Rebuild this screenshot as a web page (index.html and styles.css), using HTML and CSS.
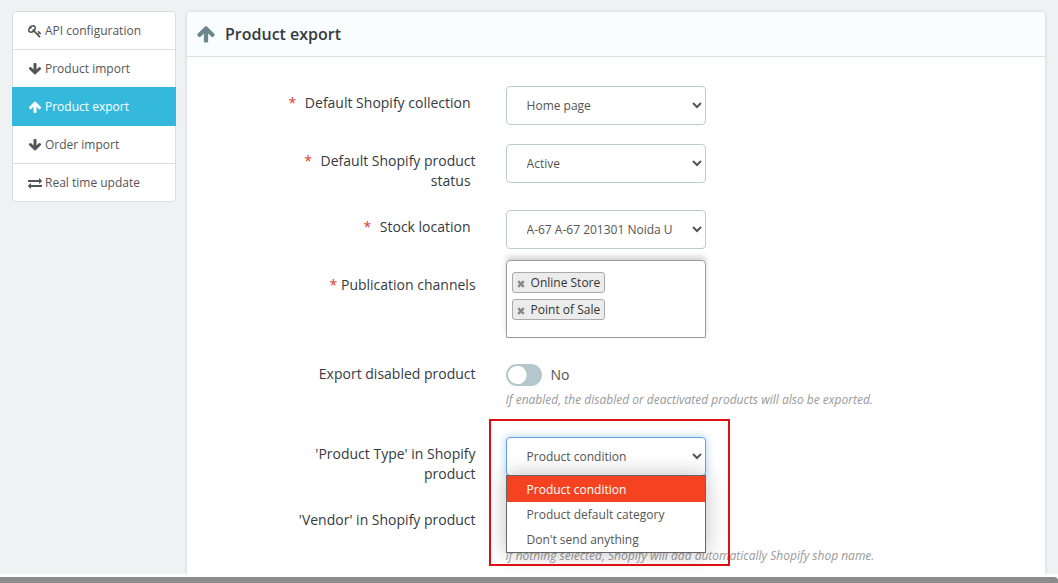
FILE: index.html
```html
<!DOCTYPE html>
<html lang="en">
<head>
    <meta charset="UTF-8">
    <meta name="viewport" content="width=device-width, initial-scale=1.0">
    <title>Product export</title>
    <link rel="stylesheet" href="styles.css">
</head>
<body>
    <svg class="sprite" aria-hidden="true">
        <symbol id="icon-key" viewBox="0 0 1792 1792"><path d="M832 512q0-80-56-136t-136-56-136 56-56 136q0 42 19 83-41-19-83-19-80 0-136 56t-56 136 56 136 136 56 136-56 56-136q0-42-19-83 41 19 83 19 80 0 136-56t56-136zm851 704q0 17-49 66t-66 49q-9 0-28.5-16t-36.5-33-38.5-40-24.5-26l-96 96 220 220q28 28 28 68 0 42-39 81t-81 39q-40 0-68-28l-671-671q-176 131-365 131-163 0-265.5-102.5t-102.5-265.5q0-160 95-313t248-248 313-95q163 0 265.5 102.5t102.5 265.5q0 189-131 365l355 355 96-96q-3-3-26-24.5t-40-38.5-33-36.5-16-28.5q0-17 49-66t66-49q13 0 23 10 6 6 46 44.5t82 79.5 86.5 86 73 78 28.5 41z"/></symbol>
        <symbol id="icon-down" viewBox="0 0 1792 1792"><path d="M1675 832q0 53-37 90l-651 652q-39 37-91 37-53 0-90-37l-651-652q-38-36-38-90 0-53 38-91l74-75q39-37 91-37 53 0 90 37l294 294v-704q0-52 38-90t90-38h128q52 0 90 38t38 90v704l294-294q37-37 90-37 52 0 91 37l75 75q37 39 37 91z"/></symbol>
        <symbol id="icon-up" viewBox="0 0 1792 1792"><path d="M1675 971q0 51-37 90l-75 75q-38 38-91 38-54 0-90-38l-294-293v704q0 52-37.5 84.5t-90.5 32.5h-128q-53 0-90.5-32.5t-37.5-84.5v-704l-294 293q-36 38-90 38t-90-38l-75-75q-38-38-38-90 0-53 38-91l651-651q35-37 90-37 54 0 91 37l651 651q37 39 37 91z"/></symbol>
        <symbol id="icon-exchange" viewBox="0 0 1792 1792"><path d="M1792 1184v192q0 13-9.5 22.5t-22.5 9.5h-1376v192q0 13-9.5 22.5t-22.5 9.5q-12 0-24-10l-319-320q-9-9-9-22 0-14 9-23l320-320q9-9 23-9 13 0 22.5 9.5t9.5 22.5v192h1376q13 0 22.5 9.5t9.5 22.5zm0-544q0 14-9 23l-320 320q-9 9-23 9-13 0-22.5-9.5t-9.5-22.5v-192h-1376q-13 0-22.5-9.5t-9.5-22.5v-192q0-13 9.5-22.5t22.5-9.5h1376v-192q0-14 9-23t23-9q12 0 24 10l319 319q9 9 9 23z"/></symbol>
        <symbol id="icon-remove" viewBox="0 0 8 8"><path d="M1.2 1.2l5.6 5.6M6.8 1.2l-5.6 5.6" fill="none" stroke="#888" stroke-width="2.4"/></symbol>
    </svg>

    <div class="page">
        <nav class="sidebar">
            <a href="#" class="menu-item"><svg class="icon"><use href="#icon-key"/></svg>API configuration</a>
            <a href="#" class="menu-item"><svg class="icon"><use href="#icon-down"/></svg>Product import</a>
            <a href="#" class="menu-item active"><svg class="icon"><use href="#icon-up"/></svg>Product export</a>
            <a href="#" class="menu-item"><svg class="icon"><use href="#icon-down"/></svg>Order import</a>
            <a href="#" class="menu-item"><svg class="icon"><use href="#icon-exchange"/></svg>Real time update</a>
        </nav>

        <main class="panel">
            <h1 class="panel-heading"><svg class="heading-icon"><use href="#icon-up"/></svg>Product export</h1>

            <form class="form">
                <div class="row">
                    <label class="label required spaced" for="collection">Default Shopify collection</label>
                    <div class="field">
                        <select class="control" id="collection"><option>Home page</option></select>
                    </div>
                </div>
                <div class="row">
                    <label class="label required spaced" for="status">Default Shopify product status</label>
                    <div class="field">
                        <select class="control" id="status"><option>Active</option></select>
                    </div>
                </div>
                <div class="row">
                    <label class="label required spaced" for="location">Stock location</label>
                    <div class="field">
                        <select class="control" id="location"><option>A-67 A-67 201301 Noida U</option></select>
                    </div>
                </div>
                <div class="row row-channels">
                    <span class="label required" id="channels">Publication channels</span>
                    <div class="field">
                        <div class="channels" role="group" aria-labelledby="channels">
                            <span class="chip"><button type="button" class="chip-remove" aria-label="Remove"><svg><use href="#icon-remove"/></svg></button>Online Store</span>
                            <span class="chip"><button type="button" class="chip-remove" aria-label="Remove"><svg><use href="#icon-remove"/></svg></button>Point of Sale</span>
                        </div>
                    </div>
                </div>
                <div class="row">
                    <label class="label" for="disabled">Export disabled product</label>
                    <div class="field">
                        <div class="switch">
                            <input type="checkbox" class="switch-input" id="disabled">
                            <span>No</span>
                        </div>
                        <p class="help help-switch">If enabled, the disabled or deactivated products will also be exported.</p>
                    </div>
                </div>
                <div class="row">
                    <label class="label" for="type">'Product Type' in Shopify product</label>
                    <div class="field">
                        <div class="dropdown">
                            <select class="control focused" id="type"><option>Product condition</option></select>
                            <div class="options">
                                <button type="button" class="option selected">Product condition</button>
                                <button type="button" class="option">Product default category</button>
                                <button type="button" class="option">Don't send anything</button>
                            </div>
                            <div class="highlight"></div>
                        </div>
                    </div>
                </div>
                <div class="row">
                    <label class="label" for="vendor">'Vendor' in Shopify product</label>
                    <div class="field">
                        <select class="control" id="vendor"></select>
                        <p class="help">If nothing selected, Shopify will add automatically Shopify shop name.</p>
                    </div>
                </div>
            </form>
        </main>
    </div>
    <div class="scroll-track"><div class="scroll-bar"></div></div>
</body>
</html>
```

FILE: styles.css
```css
* {
    box-sizing: border-box;
}
body {
    display: flex;
    flex-direction: column;
    height: 100vh;
    margin: 0;
    overflow: hidden;
    background: #fff;
    color: #363a41;
    font-family: "Open Sans", sans-serif;
    font-size: 14px;
    line-height: 20px;
}
.sprite {
    display: none;
}
.page {
    display: flex;
    flex: 1;
    align-items: flex-start;
    gap: 10px;
    min-height: 0;
    padding: 11px 12px 0;
    overflow: hidden;
    background: #eff1f2;
}

/* sidebar */
.sidebar {
    flex: 0 0 164px;
}
.menu-item {
    display: flex;
    align-items: center;
    gap: 3px;
    margin-bottom: -1px;
    padding: 10px 15px;
    border: 1px solid #dbdddd;
    background: #fff;
    color: #555;
    font-size: 12px;
    line-height: 17px;
    text-decoration: none;
}
.menu-item:first-child {
    border-radius: 4px 4px 0 0;
}
.menu-item:last-child {
    border-radius: 0 0 4px 4px;
}
.menu-item.active {
    position: relative;
    border-color: #34b9dc;
    background: #34b9dc;
    color: #fff;
}
.icon {
    width: 14px;
    height: 14px;
    fill: currentColor;
}

/* panel */
.panel {
    flex: 1;
    min-width: 0;
    border: 1px solid #dfe5e7;
    border-radius: 4px;
    background: #fff;
    box-shadow: 0 0 4px rgba(0, 0, 0, 0.06);
}
.panel-heading {
    display: flex;
    align-items: center;
    gap: 9px;
    margin: 0;
    padding: 12px 9px;
    border-bottom: 1px solid #dbe0e3;
    border-radius: 4px 4px 0 0;
    background: #fafdfe;
    font-size: 16px;
    font-weight: 600;
    line-height: 20px;
}
.heading-icon {
    width: 20px;
    height: 20px;
    fill: #6c868e;
}

/* form */
.form {
    display: flex;
    flex-direction: column;
    gap: 19px;
    padding: 29px 14px 40px 15px;
}
.row {
    display: flex;
    gap: 30px;
}
.label {
    flex: 0 0 33%;
    padding: 7px 0 0 80px;
    text-align: right;
}
.required::before {
    content: "* ";
    color: #e0392b;
}
.spaced::before {
    margin-right: 5px;
}
.spaced::after {
    content: "";
    padding-right: 5px;
}
.field {
    flex: 1;
    min-width: 0;
}
.control {
    display: block;
    width: 200px;
    height: 39px;
    padding: 0 0 0 16px;
    border: 1px solid #bbcdd2;
    border-radius: 4px;
    background: #fff;
    color: #555;
    font-family: inherit;
    font-size: 12px;
}
.control.focused {
    border-color: #66a3e0;
    box-shadow: 0 0 8px rgba(102, 175, 233, 0.6);
}
.row-channels {
    margin-top: -8px;
}
.row-channels .label {
    padding-top: 15px;
}
.channels {
    display: flex;
    flex-direction: column;
    align-items: flex-start;
    gap: 6px;
    width: 200px;
    padding: 11px 5px 17px;
    border: 1px solid #999;
    border-radius: 4px 4px 0 0;
    box-shadow: 0 -4px 5px rgba(0, 0, 0, 0.15);
}
.chip {
    display: flex;
    align-items: center;
    gap: 6px;
    padding: 0 4px;
    border: 1px solid #aaa;
    border-radius: 3px;
    background: #ececec;
    color: #333;
    font-size: 12px;
    line-height: 19px;
}
.chip-remove {
    display: flex;
    padding: 2px 0 0;
    border: 0;
    background: none;
}
.chip-remove svg {
    width: 8px;
    height: 8px;
}
.switch {
    display: flex;
    align-items: center;
    gap: 9px;
    padding-top: 7px;
    color: #555;
    line-height: 22px;
}
.switch-input {
    appearance: none;
    width: 36px;
    height: 22px;
    margin: 0;
    border: 2px solid #b3c7cd;
    border-radius: 11px;
    background: radial-gradient(circle at 9px 9px, #fff 9px, #b3c7cd 10px);
}
.help {
    margin: 5px 0 0;
    color: #999;
    font-size: 12px;
    font-style: italic;
    line-height: 18px;
}
.help-switch {
    margin-bottom: 9px;
}

/* open list */
.dropdown {
    position: relative;
    width: 200px;
}
.options {
    position: absolute;
    top: 38px;
    left: 0;
    z-index: 1;
    width: 100%;
    border: 1px solid #666;
    background: #fff;
    box-shadow: 0 0 20px rgba(0, 0, 0, 0.25);
}
.option {
    display: block;
    width: 100%;
    padding: 0 20px;
    border: 0;
    background: #fff;
    color: #555;
    font-family: inherit;
    font-size: 12px;
    line-height: 25px;
    text-align: left;
}
.option.selected {
    padding-top: 1px;
    background: #f54322;
    color: #fff;
}
.highlight {
    position: absolute;
    top: -18px;
    left: -17px;
    z-index: 2;
    width: 241px;
    height: 147px;
    border: 2px solid #db1014;
}

/* bottom scrollbar */
.scroll-track {
    padding-top: 3px;
}
.scroll-bar {
    height: 6px;
    border-radius: 0 4px 0 0;
    background: #8b8b8b;
}
```
